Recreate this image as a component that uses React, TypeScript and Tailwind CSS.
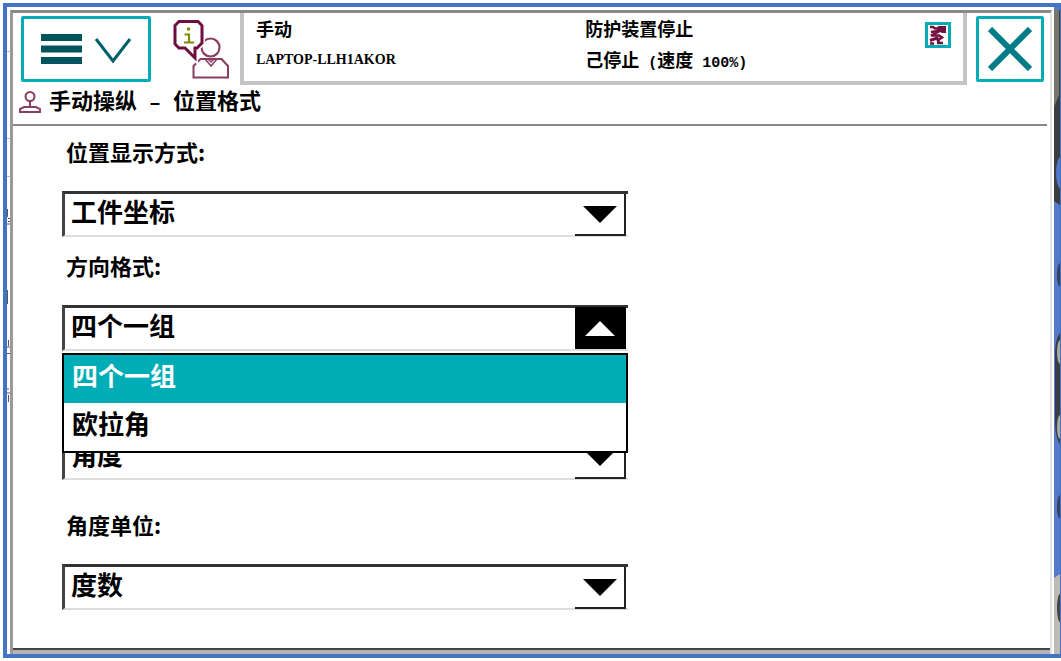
import { useId, type ReactNode } from 'react'

type DropdownProps = {
  label?: string
  ariaLabel?: string
  options: string[]
  open?: boolean
}

function Dropdown({ label, ariaLabel, options, open = false }: DropdownProps) {
  const id = useId()

  return (
    <div className="flex flex-col gap-[27px]">
      {label && (
        <label htmlFor={id} className="pl-1 text-[22px] leading-[26px]">
          {label}
        </label>
      )}
      <div className="relative h-[46px] w-full max-w-[566px]">
        <select
          id={id}
          aria-label={ariaLabel}
          className="size-full appearance-none rounded-none border-t-[3px] border-b-2 border-l-[3px] border-t-[#333] border-b-[#ddd] border-l-[#444] bg-white pb-2 pl-1.5 text-[26px] leading-8 outline-none"
        >
          {options.map((option) => (
            <option key={option}>{option}</option>
          ))}
        </select>
        <span
          className={
            open
              ? 'pointer-events-none absolute top-0.5 right-0.5 bottom-0.5 flex w-[51px] items-center justify-center bg-black text-white'
              : 'pointer-events-none absolute top-[3px] right-0.5 bottom-px flex w-[51px] items-center justify-center border-r-2 border-b-2 border-[#222] bg-white text-black'
          }
        >
          <svg width="34" height="17" viewBox="0 0 34 17" fill="currentColor" aria-hidden="true">
            <path d={open ? 'M1 16 16 1l15 15z' : 'M0 0h34L17 17z'} />
          </svg>
        </span>
        {open && (
          <ul role="listbox" aria-label={label} className="absolute top-12 left-0 z-10 w-full border-2 border-black bg-white text-[26px]">
            {options.map((option, i) => (
              <li
                key={option}
                role="option"
                aria-selected={i === 0}
                className={i === 0 ? 'h-12 bg-[#00adb7] pl-2 leading-10 text-white' : 'h-12 pl-2 leading-10'}
              >
                {option}
              </li>
            ))}
          </ul>
        )}
      </div>
    </div>
  )
}

function OperatorIcon() {
  return (
    <svg width="56" height="60" viewBox="0 0 56 60" fill="none" stroke="#8a3d64" aria-hidden="true">
      <circle cx="37.500" cy="28.500" r="9" strokeWidth="2.200" />
      <path d="M20.500 58.500V47l7-7h21l6.500 7v11.500z" strokeWidth="2" />
      <path d="m32 40 6 7 6-7M35 40l3 3 3-3" strokeWidth="1.500" />
      <path d="M6 2.500h19l4 4v17.500l-5 5h-2v10l-10-10H6l-4-4V6.500z" fill="#fff" stroke="#fff" strokeWidth="6" />
      <path d="M6 2.500h19l4 4v17.500l-5 5h-2v10l-10-10H6l-4-4V6.500z" fill="#fff" stroke="#6f0f40" strokeWidth="3" />
      <path d="M11.500 15.500H16V23M11 23.500h10" stroke="#7f8a00" strokeWidth="2.200" />
      <circle cx="15.500" cy="10" r="1.800" fill="#7f8a00" stroke="none" />
    </svg>
  )
}

function JoystickIcon() {
  return (
    <svg width="22" height="22" viewBox="0 0 22 22" fill="none" stroke="#8a3d64" strokeWidth="2" aria-hidden="true">
      <circle cx="11" cy="5.500" r="4.500" />
      <path d="M11 10v7M5 16h12l4 2v3H1v-3z" />
    </svg>
  )
}

function RobotIcon() {
  return (
    <svg width="20" height="20" viewBox="0 0 20 20" fill="none" stroke="#74103f" aria-hidden="true">
      <path d="M2 2h3l2 1.500h5M3 7l8-1" strokeWidth="2.500" />
      <path d="M10 1h8v7h-4l-5-3z" fill="#74103f" stroke="none" />
      <path d="M12 6 3 10.500h8l3 2-3 2" strokeWidth="2.500" />
      <path d="M2 15.500 9 13l2 4" strokeWidth="3" />
      <path d="M2 18.500h4M9 18h6" strokeWidth="2.500" />
    </svg>
  )
}

function Latin({ children }: { children: ReactNode }) {
  return <span className="font-['Liberation_Mono',monospace] text-[15px] whitespace-pre">{children}</span>
}

function Header() {
  return (
    <header className="flex h-[72px] pr-1.5 pl-2">
      <button type="button" aria-label="菜单" className="mt-[3px] flex h-[66px] w-[130px] items-center justify-center rounded-xs border-[3px] border-[#00adb7]">
        <svg width="92" height="30" viewBox="0 0 92 30" fill="none" aria-hidden="true">
          <path d="M1 3.500h41M1 15h41M1 26.500h41" stroke="#00545e" strokeWidth="7" />
          <path d="m56 5 17 22L90 5" stroke="#00606a" strokeWidth="3" />
        </svg>
      </button>
      <button type="button" aria-label="操作员" className="mr-[11px] ml-[22px] flex w-14 items-center">
        <OperatorIcon />
      </button>
      <div className="grid flex-1 grid-cols-[9fr_10fr] border-x-4 border-b-4 border-[#c4c4c4] px-3 text-lg leading-[31px]">
        <div>
          <p>手动</p>
          <p className="font-['Liberation_Serif',serif] text-sm leading-[31px]">LAPTOP-LLH1AKOR</p>
        </div>
        <div className="flex justify-between">
          <div>
            <p>防护装置停止</p>
            <p>
              己停止
              <Latin> (</Latin>速度<Latin> 100%)</Latin>
            </p>
          </div>
          <button type="button" aria-label="机械单元" className="mt-[9px] flex size-[26px] items-center justify-center border-[3px] border-[#00adb7]">
            <RobotIcon />
          </button>
        </div>
      </div>
      <button type="button" aria-label="关闭" className="mt-[3px] ml-[9px] flex h-[66px] w-[68px] items-center justify-center rounded-xs border-[3px] border-[#00adb7]">
        <svg width="44" height="44" viewBox="0 0 44 44" stroke="#007b87" strokeWidth="6" aria-hidden="true">
          <path d="m2 2 40 40M42 2 2 42" />
        </svg>
      </button>
    </header>
  )
}

function LeftEdge() {
  return (
    <svg width="3" height="647" viewBox="0 0 3 647" className="shrink-0" fill="none" stroke="#555" aria-hidden="true">
      <path d="M0 44.500h3M0 131.500h3M0 169.500h3" stroke="#bbb" />
      <path d="M.5 202v8M1 211.500h2M1 214.500h2M0 217h3M.5 283v14M0 340h3M0 346.500h3M1.500 333v6M0 382h2M0 386h3M1.500 388v7" />
    </svg>
  )
}

function RightEdge() {
  return (
    <svg width="6" height="647" viewBox="0 0 6 647" className="ml-0.5 shrink-0" aria-hidden="true">
      <path fill="#5479cb" d="M0 0h6v647H0z" />
      <path fill="#3c3d40" d="M0 3h6v195l-6-4z" />
      <path fill="#77756c" d="M0 3h5v85l-5 12z" />
      <ellipse cx="7" cy="166" rx="5" ry="16" fill="#5479cb" />
      <ellipse cx="6" cy="268" rx="3" ry="12" fill="#34405c" />
      <path fill="#3c3d40" d="M6 326c-4 6-5 12-5 24v62c0 12 1 18 5 26z" />
      <ellipse cx="6" cy="345" rx="3" ry="12" fill="#aaa" />
      <ellipse cx="6" cy="420" rx="3" ry="12" fill="#aaa" />
      <ellipse cx="6" cy="500" rx="3" ry="12" fill="#34405c" />
      <path fill="#bdbbb4" d="m0 571 6-4v80H0z" />
      <ellipse cx="6" cy="601" rx="3" ry="14" fill="#444" />
    </svg>
  )
}

export default function App() {
  return (
    <div className="flex min-h-screen bg-white py-[3px] pl-[3px] font-['Noto_Sans_CJK_SC',sans-serif] font-bold text-black">
      <div className="flex flex-1 border-4 border-r border-[#4472c4]">
        <LeftEdge />
        <main className="mt-[3px] flex flex-1 flex-col border-t-[3px] border-r-2 border-l-[3px] border-t-[#888] border-r-[#e2e2e2] border-l-[#999]">
          <Header />
          <h1 className="mr-[3px] flex h-[41px] items-center gap-2 border-b-2 border-[#888] pb-1.5 pl-1.5 text-[22px] leading-7">
            <JoystickIcon />
            <span>
              手动操纵
              <span className="font-['Liberation_Mono',monospace] text-xl whitespace-pre"> – </span>
              位置格式
            </span>
          </h1>
          <form className="flex flex-1 flex-col px-[49px] pt-3">
            <div className="flex flex-col gap-[15px]">
              <Dropdown label="位置显示方式:" options={['工件坐标']} />
              <Dropdown label="方向格式:" options={['四个一组', '欧拉角']} open />
            </div>
            <div className="mt-[83px] flex flex-col gap-[31px]">
              <Dropdown ariaLabel="角度" options={['角度']} />
              <Dropdown label="角度单位:" options={['度数']} />
            </div>
          </form>
          <div className="h-1.5 border-t-2 border-[#444] bg-[#b4b4b4]" />
        </main>
        <RightEdge />
      </div>
    </div>
  )
}
